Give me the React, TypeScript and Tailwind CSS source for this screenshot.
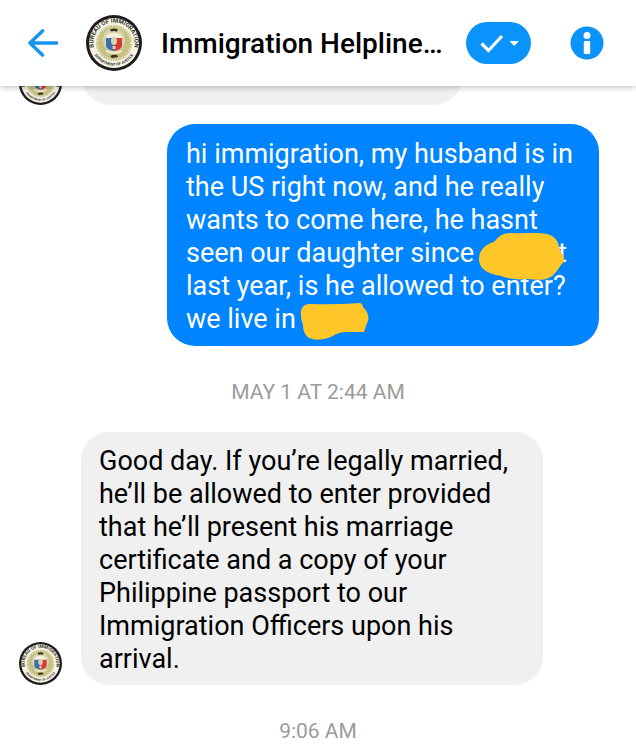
import { useId } from "react";
import type { ReactNode } from "react";

function Seal({ className }: { className: string }) {
  const id = useId();
  return (
    <svg viewBox="0 0 56 56" className={className} role="img" aria-label="Bureau of Immigration seal">
      <defs>
        <path id={id + "t"} d="M10.200 38.500a20.600 20.600 0 1 1 35.600 0" />
        <path id={id + "b"} d="M9 40.500a22.800 22.800 0 0 0 38 0" />
      </defs>
      <circle cx="28" cy="28" r="28" fill="#1c1b1d" />
      <circle cx="28" cy="28" r="25" fill="#f6f3e6" />
      <circle cx="28" cy="28" r="18" fill="#c6c084" />
      <circle cx="28" cy="28" r="17" fill="none" stroke="#f1edcf" strokeWidth="2" strokeDasharray="1 1.500" />
      <ellipse cx="28" cy="25" rx="11" ry="12" fill="#d9d5a9" />
      <text fontSize="6" fontWeight="700" fill="#39382f" fontFamily="Roboto, sans-serif">
        <textPath href={"#" + id + "t"} startOffset="50%" textAnchor="middle">BUREAU OF IMMIGRATION</textPath>
      </text>
      <text fontSize="3.8" fontWeight="700" fill="#39382f" fontFamily="Roboto, sans-serif">
        <textPath href={"#" + id + "b"} startOffset="50%" textAnchor="middle">DEPARTMENT OF JUSTICE</textPath>
      </text>
      <path d="M24 14.500q4-2 8 0l-1 2q-3-1-6 0z" fill="#33301f" />
      <path d="M20 22q2-4 8-4t8 4v2H20z" fill="#f3f0e0" />
      <path d="M20 23h8v13q-7-1-8-5z" fill="#3a6cb0" />
      <path d="M28 23h8v8q-1 4-8 5z" fill="#d33a36" />
      <ellipse cx="28" cy="26" rx="3" ry="4" fill="#d8d3ae" />
      <path d="M26.500 31h3v3h-3z" fill="#d8d3ae" />
      <path d="M20 35q8 4 16 0v2q-8 4-16 0z" fill="#f1ecd2" />
      <path d="M24 41q4-2 7-1l1 2-6 1z" fill="#37351f" />
    </svg>
  );
}

function Received({ children }: { children: ReactNode }) {
  return (
    <div className="flex items-end gap-[19px] pl-[19px] pr-6">
      <Seal className="size-[43px] shrink-0" />
      <p className="max-w-[462px] rounded-[28px] bg-[#f0f0f0] px-[18px] pb-[9px] pt-[13px] text-black">{children}</p>
    </div>
  );
}

function Time({ children }: { children: ReactNode }) {
  return <time className="block text-center text-[21px] leading-6 text-[#9b9b9b]">{children}</time>;
}

export default function App() {
  return (
    <div className="min-h-screen overflow-hidden bg-white font-['Roboto',sans-serif] text-[27px] leading-[33px]">
      <header className="relative z-10 flex h-[86px] items-center bg-white pl-7 pr-8 shadow-[0_1px_6px_rgba(0,0,0,0.28)]">
        <button type="button" aria-label="Back" className="shrink-0">
          <svg viewBox="0 0 30 28" className="h-7 w-[30px]" fill="none" stroke="#1695ee" strokeWidth="3.600" strokeLinecap="round" strokeLinejoin="round">
            <path d="M28.500 14H2M14.500 2L2 14l12.500 12" />
          </svg>
        </button>
        <Seal className="ml-7 size-14 shrink-0" />
        <h1 className="ml-[19px] min-w-0 flex-1 truncate text-[28px] font-medium text-black">Immigration Helpline…</h1>
        <button type="button" aria-label="Mark as done" className="ml-4 flex h-[42px] w-[65px] shrink-0 items-center justify-center rounded-full bg-[#0a93fb]">
          <svg viewBox="0 0 40 20" className="h-5 w-10" fill="none">
            <path d="M2.500 10.500l7 7L23 3" stroke="#fff" strokeWidth="3.200" />
            <path d="M30.500 8h9.500L35.200 13z" fill="#fff" />
          </svg>
        </button>
        <button type="button" aria-label="Conversation information" className="ml-[39px] shrink-0">
          <svg viewBox="0 0 34 34" className="size-[34px]">
            <circle cx="17" cy="17" r="16.500" fill="#0a93fb" />
            <circle cx="17" cy="9.500" r="3.500" fill="#fff" />
            <rect x="13.800" y="15" width="6.400" height="13" rx="1" fill="#fff" />
          </svg>
        </button>
      </header>

      <main>
        <div className="flex h-[19px] items-end gap-5 overflow-hidden pl-[19px]">
          <Seal className="size-[43px] shrink-0" />
          <div className="h-14 w-[380px] shrink-0 rounded-[28px] bg-[#f0f0f0]" />
        </div>

        <div className="mt-[19px] flex justify-end pl-6 pr-[37px]">
          <p className="max-w-[432px] rounded-[28px] bg-[#0084ff] px-[19px] pb-[10px] pt-[14px] text-white">
            hi immigration, my husband is in the US right now, and he really wants to come here, he hasnt seen our daughter since
            <span className="relative inline-block h-[33px] w-[84px] align-top">
              <svg viewBox="0 0 87 48" className="absolute left-1 top-[-5px] h-12 w-[87px]">
                <path d="M1 27C1 18 8 12 16 10C21 4 25 1 34 1C47 2 59 0 69 2C77 4 80 9 81 15C82 20 87 23 86 30C82 33 81 37 78 40C70 50 61 48 50 47C39 48 31 47 23 44C12 42 1 38 1 27Z" fill="#ffc629" />
              </svg>
            </span>
            <span>t</span>{" "}
            <span>last year, is he allowed to enter? we live in</span>
            <span className="relative inline-block h-[33px] w-[74px] align-top">
              <svg viewBox="0 0 69 38" className="absolute left-1 top-0 h-[38px] w-[69px]">
                <path d="M2 5Q4 1 10 1Q35 2 60 0Q62 0 63 4Q70 11 68 18Q66 22 64 29L47 29Q38 29 31 34Q18 39 9 35Q3 31 3 22Q-1 10 2 5Z" fill="#ffc629" />
              </svg>
            </span>
          </p>
        </div>

        <div className="mt-[34px]">
          <Time>MAY 1 AT 2:44 AM</Time>
        </div>

        <div className="mt-7">
          <Received>
            Good day. If you’re legally married, he’ll be allowed to enter provided that he’ll present his marriage certificate and a copy of your Philippine passport to our Immigration Officers upon his arrival.
          </Received>
        </div>

        <div className="mt-[34px]">
          <Time>9:06 AM</Time>
        </div>
      </main>
    </div>
  );
}
